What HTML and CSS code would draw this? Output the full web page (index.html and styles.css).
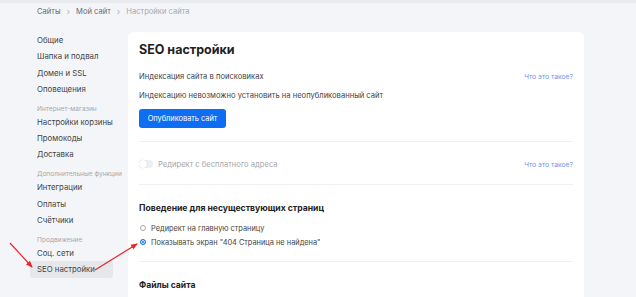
FILE: index.html
```html
<!DOCTYPE html>
<html lang="ru">
<head>
<meta charset="utf-8">
<link rel="stylesheet" href="styles.css">
</head>
<body>
<div class="topline"></div>
<nav class="crumbs">
  <span class="crumb">Сайты</span><span class="sep">›</span><span class="crumb">Мой сайт</span><span class="sep">›</span><span class="crumb current">Настройки сайта</span>
</nav>
<div class="layout">
  <aside class="sidebar">
    <div class="item">Общие</div>
    <div class="item">Шапка и подвал</div>
    <div class="item">Домен и SSL</div>
    <div class="item">Оповещения</div>
    <div class="group">Интернет-магазин</div>
    <div class="item">Настройки корзины</div>
    <div class="item">Промокоды</div>
    <div class="item">Доставка</div>
    <div class="group">Дополнительные функции</div>
    <div class="item">Интеграции</div>
    <div class="item">Оплаты</div>
    <div class="item">Счётчики</div>
    <div class="group">Продвижение</div>
    <div class="item">Соц. сети</div>
    <div class="item active">SEO настройки</div>
  </aside>
  <main class="card">
    <h1 class="title">SEO настройки</h1>
    <div class="row r-index">
      <span>Индексация сайта в поисковиках</span>
      <span class="link">Что это такое?</span>
    </div>
    <div class="row r-note"><span>Индексацию невозможно установить на неопубликованный сайт</span></div>
    <button class="btn">Опубликовать сайт</button>
    <div class="divider d1"></div>
    <div class="row r-toggle">
      <span class="toggle-wrap"><span class="toggle"><span class="knob"></span></span><span class="muted">Редирект с бесплатного адреса</span></span>
      <span class="link">Что это такое?</span>
    </div>
    <div class="divider d2"></div>
    <h2 class="subtitle s1">Поведение для несуществующих страниц</h2>
    <label class="radio r1"><span class="dot"></span>Редирект на главную страницу</label>
    <label class="radio r2"><span class="dot checked"></span>Показывать экран "404 Страница не найдена"</label>
    <div class="divider d3"></div>
    <h2 class="subtitle s2">Файлы сайта</h2>
  </main>
</div>
<svg class="arrows" width="636" height="297" viewBox="0 0 636 297">
  <defs>
    <marker id="ah" markerWidth="8" markerHeight="8" refX="6" refY="3.5" orient="auto" markerUnits="userSpaceOnUse">
      <path d="M0,0.8 L7,3.5 L0,6.2 Z" fill="#e8262a"/>
    </marker>
  </defs>
  <line x1="10" y1="243" x2="32" y2="267" stroke="#e8262a" stroke-width="1.2" marker-end="url(#ah)"/>
  <line x1="95" y1="270" x2="137" y2="244" stroke="#e8262a" stroke-width="1.2" marker-end="url(#ah)"/>
</svg>
</body>
</html>
```
FILE: styles.css
```css
* { box-sizing: border-box; }
html, body { margin: 0; padding: 0; }
body {
  width: 636px;
  height: 297px;
  overflow: hidden;
  background: #f4f5f9;
  font-family: Inter, "Noto Sans", sans-serif;
  color: #444;
  position: relative;
}
.topline {
  height: 2px;
  background: #e9eaee;
  box-shadow: 0 1px 2px rgba(0,0,0,0.06);
}
.crumbs {
  display: flex;
  align-items: center;
  height: 14px;
  margin-top: 2px;
  padding-left: 37px;
  font-size: 7.6px;
  color: #6a6a6a;
}
.crumb.current { color: #a5a8ae; }
.sep { color: #b0b3b8; margin: 0 6px; font-size: 9px; }
.layout {
  display: flex;
  align-items: flex-start;
  margin-top: 14px;
  padding-left: 30px;
}
.sidebar {
  width: 98px;
  display: flex;
  flex-direction: column;
  font-size: 7.8px;
  color: #444;
}
.item {
  height: 16.3px;
  line-height: 16.3px;
  padding-left: 7px;
  width: 83px;
  border-radius: 3px;
}
.group {
  font-size: 6.6px;
  color: #a6a8ad;
  padding-left: 7px;
  margin-top: 6.7px;
  height: 10px;
  line-height: 10px;
}
.item.active { background: #e6e7ea; }
.card {
  width: 456px;
  height: 265px;
  background: #fff;
  border-radius: 6px 6px 0 0;
  padding: 10px 11px 0;
  display: flex;
  flex-direction: column;
}
.title {
  margin: 0;
  font-size: 12.5px;
  line-height: 16px;
  font-weight: 700;
  color: #222;
}
.row {
  display: flex;
  justify-content: space-between;
  align-items: center;
  height: 10px;
  font-size: 7.6px;
}
.r-index { margin-top: 13px; }
.r-note { margin-top: 9px; }
.link { font-size: 6.8px; color: #6f96ee; }
.btn {
  margin-top: 9px;
  width: 87px;
  height: 19px;
  border: 0;
  border-radius: 3px;
  background: #0d6ef2;
  color: #fff;
  font-family: inherit;
  font-size: 7.4px;
  padding: 0;
}
.divider { height: 1px; background: #f0f1f3; }
.d1 { margin-top: 13px; }
.r-toggle { margin-top: 17px; }
.toggle-wrap { display: flex; align-items: center; }
.toggle {
  width: 14px;
  height: 8px;
  border-radius: 4px;
  background: #eeeff1;
  position: relative;
  margin-right: 5px;
}
.knob {
  position: absolute;
  left: 0;
  top: 0;
  width: 8px;
  height: 8px;
  border-radius: 50%;
  background: #fff;
  box-shadow: 0 0 1px rgba(0,0,0,0.25);
}
.muted { color: #a5a7ab; }
.d2 { margin-top: 15px; }
.subtitle {
  margin: 0;
  font-size: 8.6px;
  line-height: 10px;
  font-weight: 700;
  color: #222;
}
.s1 { margin-top: 18px; }
.radio {
  display: flex;
  align-items: center;
  height: 10px;
  font-size: 7.4px;
  color: #444;
  padding-left: 1px;
}
.r1 { margin-top: 10px; }
.r2 { margin-top: 4px; }
.dot {
  width: 6px;
  height: 6px;
  border-radius: 50%;
  border: 1px solid #a8aaae;
  margin-right: 5px;
  background: #fff;
}
.dot.checked {
  border: 1px solid #1a73f0;
  background: #1a73f0;
  box-shadow: inset 0 0 0 1px #fff;
}
.d3 { margin-top: 14px; }
.s2 { margin-top: 18px; }
.arrows { position: absolute; left: 0; top: 0; pointer-events: none; }
```
